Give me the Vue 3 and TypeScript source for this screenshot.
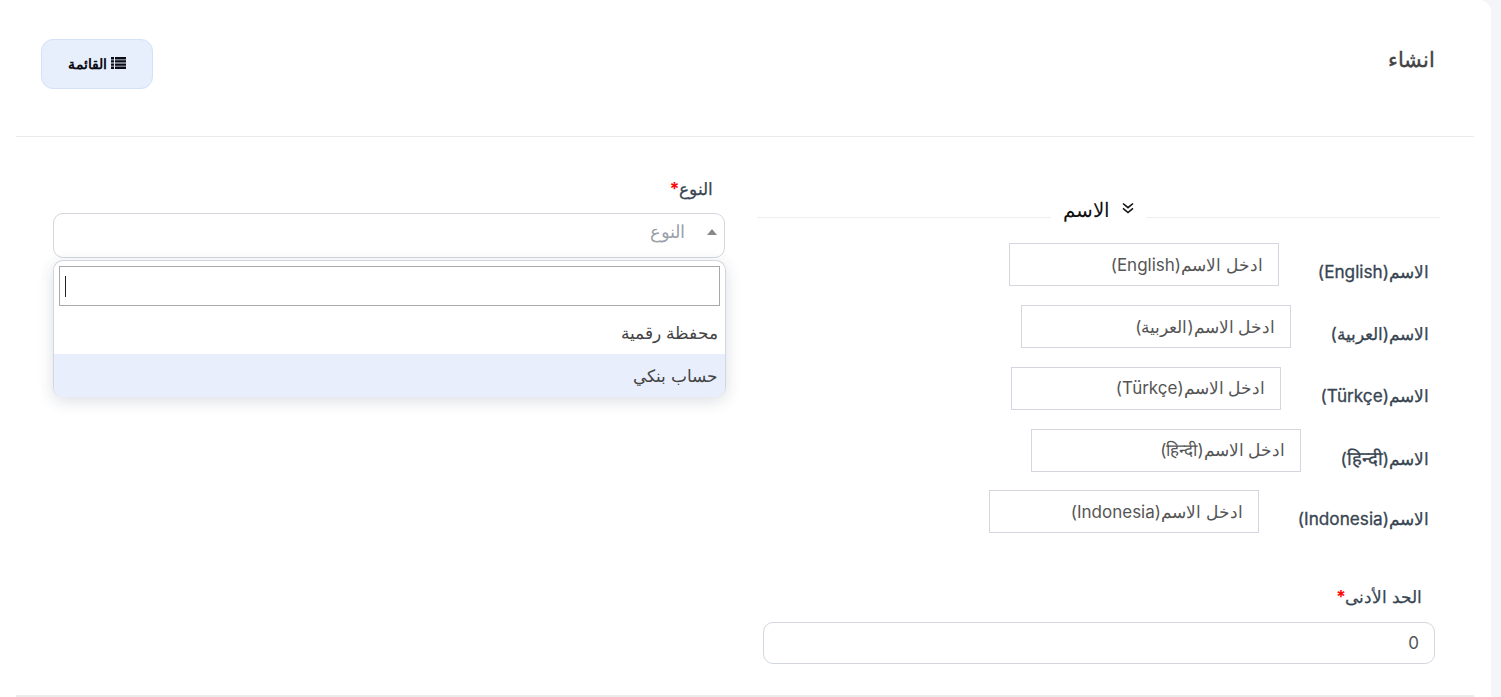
<script setup lang="ts">
interface NameField { text: string; isHindi: boolean }
const names: NameField[] = ['English', 'العربية', 'Türkçe', 'हिन्दी', 'Indonesia'].map((text) => ({
  text,
  isHindi: text === 'हिन्दी',
}))
</script>

<template>
  <div class="page" dir="rtl">
    <main class="card">
      <header class="head">
        <h1 class="title">انشاء</h1>
        <button class="list-btn" type="button">
          <svg class="list-icon" viewBox="0 0 15 12" width="15" height="12" aria-hidden="true">
            <path d="M0 0h3v2.4H0zM4 0h11v2.4H4zM0 3.2h3v2.4H0zM4 3.2h11v2.4H4zM0 6.4h3v2.4H0zM4 6.4h11v2.4H4zM0 9.6h3V12H0zM4 9.6h11V12H4z" fill="#0b0b14" />
          </svg>
          <span class="list-text">القائمة</span>
        </button>
      </header>

      <div class="body">
        <section class="col-right">
          <div class="legend">
            <span class="legend-text">
              <svg class="legend-icon" viewBox="0 0 12 12" width="12" height="12" aria-hidden="true">
                <path d="M1 1.5l5 4.2 5-4.2M1 6.3l5 4.2 5-4.2" fill="none" stroke="#111" stroke-width="1.6" />
              </svg>
              <span>الاسم</span>
            </span>
          </div>
          <div class="names">
            <div v-for="n in names" :key="n.text" class="name-row">
              <label class="name-label">الاسم(<span :class="{ hindi: n.isHindi }">{{ n.text }}</span>)</label>
              <input class="name-input" type="text" :placeholder="`ادخل الاسم(${n.text})`" />
            </div>
          </div>
          <div class="min-field">
            <label class="field-label min-label">الحد الأدنى<span class="req">*</span></label>
            <input class="round-input" type="text" value="0" />
          </div>
        </section>

        <section class="col-left">
          <label class="field-label type-label">النوع<span class="req">*</span></label>
          <div class="select">
            <span class="caret"></span>
            <span class="select-ph">النوع</span>
          </div>
          <div class="dropdown">
            <div class="search-wrap">
              <div class="search"><span class="cursor"></span></div>
            </div>
            <div class="option first">محفظة رقمية</div>
            <div class="option active">حساب بنكي</div>
          </div>
        </section>
      </div>
      <div class="foot-rule"></div>
    </main>
  </div>
</template>

<style scoped>
.page {
  width: 1501px;
  height: 697px;
  background: #f4f5f9;
  overflow: hidden;
  font-family: Inter, sans-serif;
  color: #384551;
}
.card {
  width: 1491px;
  height: 697px;
  margin-right: 10px;
  background: #fff;
  border-top-right-radius: 12px;
  box-sizing: border-box;
  padding: 0 17px 0 27px;
}
.head {
  height: 137px;
  border-bottom: 1px solid #e9eaec;
  box-sizing: border-box;
  display: flex;
  justify-content: space-between;
  align-items: flex-start;
  padding: 39px 39px 0 0;
  margin-left: -11px;
}
.title {
  margin: 6px 0 0;
  font-size: 21px;
  line-height: 30px;
  font-weight: 500;
  color: #444;
  -webkit-text-stroke: 0.35px #444;
}
.list-btn {
  width: 112px;
  height: 50px;
  margin-left: 25px;
  border: 1px solid #d5e1f9;
  border-radius: 12px;
  background: #e7eefc;
  display: flex;
  align-items: center;
  justify-content: center;
  gap: 4px;
  font: 600 14.2px Inter, sans-serif;
  color: #0b0b14;
  padding: 0;
}
.list-icon { flex: none; margin-top: -3px; }
.list-text { margin-top: -2px; }
.body {
  height: 558px;
  display: flex;
  justify-content: space-between;
  padding: 38px 0 0 26px;
  box-sizing: border-box;
}
.col-right { width: 683px; margin-right: 34px; }
.legend {
  height: 1px;
  background: #eeeff1;
  margin-top: 42px;
  position: relative;
}
.legend-text {
  position: absolute;
  right: 294px;
  top: -20px;
  display: flex;
  align-items: center;
  gap: 12px;
  background: #fff;
  padding: 0 12px;
  color: #111;
  font-size: 20px;
  font-weight: 500;
  line-height: 28px;
  height: 26px;
}
.legend-icon { margin-top: -4px; }
.names {
  margin-top: 25.3px;
  display: flex;
  flex-direction: column;
  gap: 18.76px;
  padding-right: 11px;
}
.name-row {
  display: flex;
  align-items: flex-start;
  gap: 39px;
  height: 43px;
}
.name-label {
  font-size: 17.2px;
  font-weight: 400;
  line-height: 20px;
  margin-top: 19px;
  color: #384551;
  white-space: nowrap;
  -webkit-text-stroke: 0.3px #384551;
}
.hindi { font-size: 18.5px; }
.name-input {
  width: 270px;
  height: 43px;
  box-sizing: border-box;
  border: 1px solid #d3d6de;
  padding: 0 15px;
  font: 17px Inter, sans-serif;
  outline: none;
  color: #444;
  background: #fff;
  direction: rtl;
}
.name-input::placeholder { color: #555; opacity: 1; }
.min-field { margin: 54px 5px 0 6px; }
.field-label {
  display: block;
  font-size: 17.3px;
  font-weight: 500;
  line-height: 20px;
  color: #384551;
  -webkit-text-stroke: 0.25px #384551;
}
.min-label { padding-right: 13px; margin-bottom: 15px; }
.req { color: #ff0000; -webkit-text-stroke: 0.25px #ff0000; }
.round-input {
  width: 100%;
  height: 42px;
  box-sizing: border-box;
  border: 1px solid #d3d6de;
  border-radius: 10px;
  padding: 0 15px;
  font: 17px Inter, sans-serif;
  color: #555;
  outline: none;
  background: #fff;
  direction: rtl;
}
.col-left { width: 672px; position: relative; }
.type-label { padding-right: 12px; margin-top: 4px; margin-bottom: 14px; }
.select {
  height: 45px;
  box-sizing: border-box;
  border: 1px solid #d3d6de;
  border-radius: 10px;
  display: flex;
  align-items: center;
  padding-right: 7px;
  gap: 22px;
}
.caret {
  width: 0;
  height: 0;
  border-left: 5px solid transparent;
  border-right: 5px solid transparent;
  border-bottom: 6px solid #888;
  margin-top: -8px;
}
.select-ph {
  font-size: 18px;
  color: #9aa1aa;
  margin-top: -8px;
}
.dropdown {
  position: absolute;
  top: 85px;
  left: 0;
  width: 673px;
  height: 137px;
  box-sizing: border-box;
  background: #fff;
  border: 1px solid #d3d6de;
  border-bottom: 0;
  border-radius: 10px;
  box-shadow: 0 4px 16px rgba(40, 50, 80, 0.16);
  overflow: hidden;
}
.search-wrap { padding: 5px 5px 0; }
.search {
  height: 40px;
  box-sizing: border-box;
  border: 1px solid #a9a9a9;
  display: flex;
  align-items: center;
  justify-content: flex-end;
  padding-left: 5px;
}
.cursor { width: 1px; height: 21px; background: #222; }
.option {
  height: 43px;
  line-height: 44px;
  padding-right: 7px;
  font-size: 17px;
  color: #444;
}
.option.first { margin-top: 5px; }
.option.active { background: #e8eefc; }
.foot-rule {
  height: 2px;
  background: #ebebeb;
  margin-left: -11px;
}
</style>

<style>
html, body { margin: 0; background: #f4f5f9; }
</style>
